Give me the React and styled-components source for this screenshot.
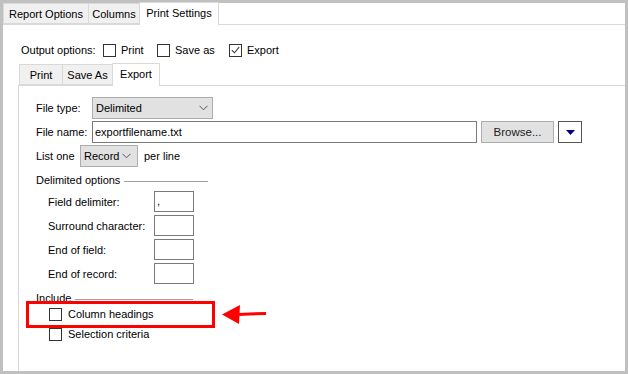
import styled, { createGlobalStyle } from "styled-components";

const GlobalStyle = createGlobalStyle`
  html, body { margin: 0; padding: 0; background: #fff; }
  body { font-family: "Liberation Sans", Arial, sans-serif; font-size: 11px; color: #000; }
  * { box-sizing: border-box; }
`;

const CheckMark = () => (
  <svg width="12" height="12" viewBox="0 0 12 12">
    <path d="M2 6.2 L4.8 9 L10 2.8" fill="none" stroke="#333" strokeWidth="1.1" />
  </svg>
);

const Chevron = () => (
  <svg width="9" height="6" viewBox="0 0 9 6">
    <path d="M0.5 0.8 L4.5 4.8 L8.5 0.8" fill="none" stroke="#555" strokeWidth="1" />
  </svg>
);

const App = () => {
  return (
    <>
      <GlobalStyle />
      <Frame>
        <TabStrip>
          <Tab $w={86}>Report Options</Tab>
          <Tab $w={52}>Columns</Tab>
          <Tab $w={80} $active>Print Settings</Tab>
        </TabStrip>
        <Pane>
          <OutputRow>
            <OutputLabel>Output options:</OutputLabel>
            <CheckItem $w={54}><Box /><span>Print</span></CheckItem>
            <CheckItem $w={72}><Box /><span>Save as</span></CheckItem>
            <CheckItem><Box><CheckMark /></Box><span>Export</span></CheckItem>
          </OutputRow>

          <InnerTabStrip>
            <Tab $w={44}>Print</Tab>
            <Tab $w={51}>Save As</Tab>
            <Tab $w={48} $active>Export</Tab>
          </InnerTabStrip>

          <InnerPane>
            <FormRow $mt={1}>
              <Label $w={56}>File type:</Label>
              <Select $w={121}>
                <span>Delimited</span>
                <Chevron />
              </Select>
            </FormRow>
            <FormRow $mt={2}>
              <Label $w={56}>File name:</Label>
              <TextInput $w={385}>exportfilename.txt</TextInput>
              <BrowseButton>Browse...</BrowseButton>
              <MenuButton>
                <svg width="9" height="5" viewBox="0 0 9 5">
                  <path d="M0 0 H9 L4.5 5 Z" fill="#000080" />
                </svg>
              </MenuButton>
            </FormRow>
            <FormRow $mt={2}>
              <Label $w={44}>List one</Label>
              <Select $w={58} $pad={6}>
                <span>Record</span>
                <Chevron />
              </Select>
              <Suffix>per line</Suffix>
            </FormRow>

            <GroupHeading $mt={3} $h={20}>
              <span>Delimited options</span>
              <Rule $w={84} />
            </GroupHeading>
            <FieldList>
              <FieldRow>
                <FieldLabel>Field delimiter:</FieldLabel>
                <SmallInput>,</SmallInput>
              </FieldRow>
              <FieldRow>
                <FieldLabel>Surround character:</FieldLabel>
                <SmallInput />
              </FieldRow>
              <FieldRow>
                <FieldLabel>End of field:</FieldLabel>
                <SmallInput />
              </FieldRow>
              <FieldRow>
                <FieldLabel>End of record:</FieldLabel>
                <SmallInput />
              </FieldRow>
            </FieldList>

            <IncludeGroup>
              <GroupHeading $h={16}>
                <span>Include</span>
                <Rule $w={118} />
              </GroupHeading>
              <IncludeList>
                <IncludeRow>
                  <Box /><span>Column headings</span>
                </IncludeRow>
                <IncludeRow>
                  <Box /><span>Selection criteria</span>
                </IncludeRow>
              </IncludeList>
              <Highlight />
              <Arrow width="46" height="22" viewBox="0 0 46 22">
                <path d="M44 10.4 L16 11.4" stroke="#ff0000" strokeWidth="3" fill="none" />
                <path d="M0 11.5 L18 2 L17 21 Z" fill="#ff0000" />
              </Arrow>
            </IncludeGroup>
          </InnerPane>
        </Pane>
      </Frame>
    </>
  );
};

export default App;

const Frame = styled.div`
  width: 628px;
  height: 374px;
  border: 3px solid #c0c0c0;
  background: #fff;
  display: flex;
  flex-direction: column;
`;

const TabStrip = styled.div`
  display: flex;
  align-items: flex-end;
  height: 22px;
  border-bottom: 1px solid #d9d9d9;
`;

const Tab = styled.div`
  width: ${({ $w }) => $w}px;
  height: ${({ $active }) => ($active ? "23px" : "21px")};
  margin-bottom: ${({ $active }) => ($active ? "-1px" : "0")};
  padding: ${({ $active }) => ($active ? "0 0 2px" : "1px 0 0")};
  display: flex;
  align-items: center;
  justify-content: center;
  background: ${({ $active }) => ($active ? "#fff" : "#f0f0f0")};
  border: 1px solid #d9d9d9;
  border-bottom: ${({ $active }) => ($active ? "none" : "1px solid #d9d9d9")};
  margin-left: -1px;
  position: relative;
  z-index: ${({ $active }) => ($active ? 1 : 0)};
  white-space: nowrap;
  &:first-child { margin-left: 0; }
`;

const Pane = styled.div`
  flex: 1;
  display: flex;
  flex-direction: column;
  padding: 15px 0 0 15px;
`;

const OutputRow = styled.div`
  display: flex;
  align-items: center;
  height: 20px;
  padding-left: 3px;
`;

const OutputLabel = styled.span`
  width: 82px;
`;

const CheckItem = styled.div`
  display: flex;
  align-items: center;
  gap: 5px;
  width: ${({ $w }) => ($w ? `${$w}px` : "auto")};
`;

const Box = styled.div`
  width: 13px;
  height: 13px;
  border: 1px solid #333;
  background: #fff;
  display: flex;
  align-items: center;
  justify-content: center;
  flex-shrink: 0;
`;

const InnerTabStrip = styled.div`
  display: flex;
  align-items: flex-end;
  height: 22px;
  margin-top: 4px;
  border-bottom: 1px solid #d9d9d9;
  padding-left: 1px;
`;

const InnerPane = styled.div`
  flex: 1;
  border-left: 1px solid #d9d9d9;
  padding: 10px 0 0 17px;
  display: flex;
  flex-direction: column;
`;

const FormRow = styled.div`
  display: flex;
  align-items: center;
  height: 22px;
  margin-top: ${({ $mt }) => $mt || 0}px;
`;

const Label = styled.div`
  width: ${({ $w }) => $w}px;
  flex-shrink: 0;
`;

const Select = styled.div`
  width: ${({ $w }) => $w}px;
  height: 22px;
  background: #e1e1e1;
  border: 1px solid #adadad;
  display: flex;
  align-items: center;
  justify-content: space-between;
  padding: 0 ${({ $pad }) => $pad || 4}px 0 3px;
`;

const TextInput = styled.div`
  width: ${({ $w }) => $w}px;
  height: 22px;
  border: 1px solid #7a7a7a;
  background: #fff;
  display: flex;
  align-items: center;
  padding-left: 2px;
`;

const BrowseButton = styled.div`
  width: 73px;
  height: 22px;
  margin-left: 4px;
  background: #e1e1e1;
  border: 1px solid #adadad;
  display: flex;
  align-items: center;
  justify-content: center;
  font-size: 11.5px;
  color: #222;
`;

const MenuButton = styled.div`
  width: 24px;
  height: 22px;
  margin-left: 4px;
  border: 1px solid #555;
  background: #fff;
  display: flex;
  align-items: center;
  justify-content: center;
`;

const Suffix = styled.span`
  margin-left: 6px;
`;

const GroupHeading = styled.div`
  display: flex;
  align-items: center;
  height: ${({ $h }) => $h}px;
  margin-top: ${({ $mt }) => $mt || 0}px;
`;

const Rule = styled.div`
  width: ${({ $w }) => $w}px;
  height: 1px;
  margin-left: 4px;
  margin-top: 2px;
  background: #a0a0a0;
`;

const FieldList = styled.div`
  display: flex;
  flex-direction: column;
  gap: 3px;
  padding-left: 12px;
  margin-top: 1px;
`;

const FieldRow = styled.div`
  display: flex;
  align-items: center;
  height: 21px;
`;

const FieldLabel = styled.div`
  width: 106px;
`;

const SmallInput = styled.div`
  width: 40px;
  height: 21px;
  border: 1px solid #7a7a7a;
  padding-left: 2px;
  line-height: 18px;
`;

const IncludeGroup = styled.div`
  position: relative;
  margin-top: 6px;
  width: 260px;
`;

const IncludeList = styled.div`
  display: flex;
  flex-direction: column;
  gap: 2px;
  margin-top: -1px;
`;

const IncludeRow = styled.div`
  display: flex;
  align-items: center;
  gap: 6px;
  height: 18px;
  padding-left: 13px;
`;

const Highlight = styled.div`
  position: absolute;
  left: -10px;
  top: 11px;
  width: 189px;
  height: 27px;
  border: 3px solid #ff0000;
`;

const Arrow = styled.svg`
  position: absolute;
  left: 186px;
  top: 13px;
`;
